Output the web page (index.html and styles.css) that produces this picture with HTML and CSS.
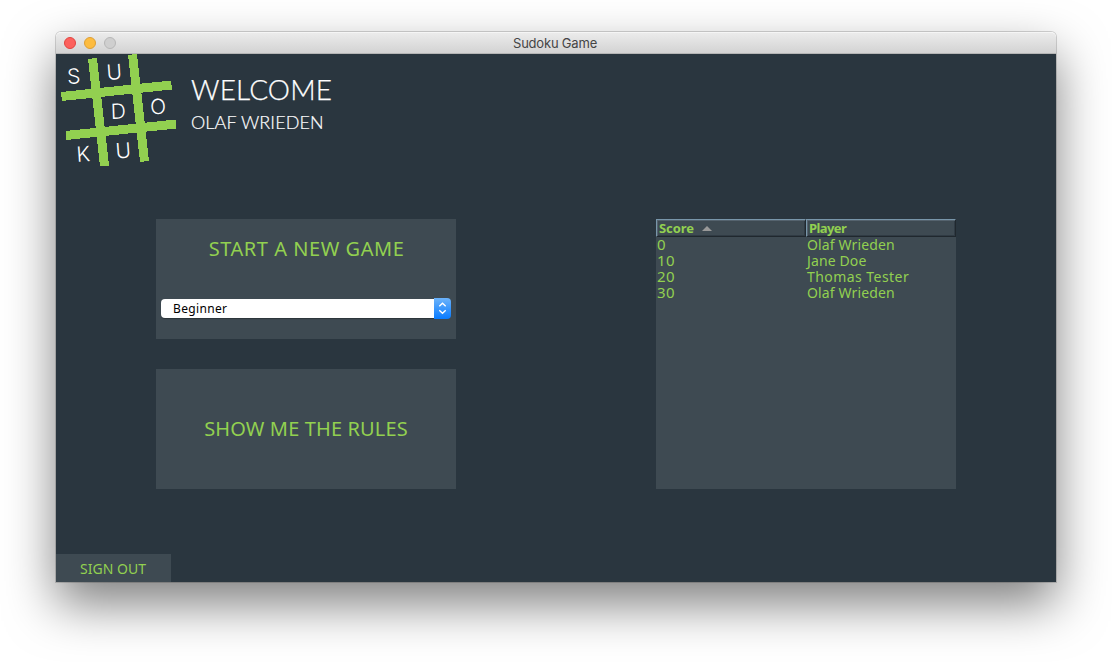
FILE: index.html
```html
<!DOCTYPE html>
<html lang="en">
<head>
<meta charset="utf-8">
<title>Sudoku Game</title>
<link rel="stylesheet" href="styles.css">
</head>
<body>
<main class="window">
  <header class="titlebar">
    <div class="lights"><i class="light close"></i><i class="light minimize"></i><i class="light disabled"></i></div>
    <span class="title">Sudoku Game</span>
  </header>
  <div class="content">
    <section class="top">
      <svg class="logo" viewBox="0 0 130 120" width="130" height="120" role="img" aria-label="Sudoku">
        <g stroke="#92d050" stroke-width="9" shape-rendering="crispEdges">
          <path d="M36.500 4.500 48.500 112M76.500 .5 88.500 107.500M5.500 42.500 115.500 31M10 81.500 120 70"/>
        </g>
        <g class="logo-text">
          <text transform="translate(11.500 30) rotate(-3)">S</text>
          <text transform="translate(51 26) rotate(-4)">U</text>
          <text transform="translate(55 65) rotate(-2)">D</text>
          <text transform="translate(94.500 60.500) rotate(-3)">O</text>
          <text transform="translate(21 108) rotate(-4)">K</text>
          <text transform="translate(60 104.500) rotate(-4)">U</text>
        </g>
      </svg>
      <div class="greeting">
        <h1 class="welcome">WELCOME</h1>
        <p class="user">OLAF WRIEDEN</p>
      </div>
    </section>
    <section class="panels">
      <div class="actions">
        <div class="card new-game">
          <button class="card-label start">START A NEW GAME</button>
          <div class="select">
            <span class="value">Beginner</span>
            <svg class="stepper" width="17" height="21" viewBox="0 0 17 21"><path d="M5.300 8.300 8.500 5.300l3.200 3M5.300 12.300l3.200 3 3.200-3" fill="none" stroke="#fff" stroke-width="1.400"/></svg>
          </div>
        </div>
        <button class="card card-label rules">SHOW ME THE RULES</button>
      </div>
      <div class="scores">
        <div class="row head"><span class="cell"><b>Score</b><i class="sort"></i></span><span class="cell"><b class="player-head">Player</b></span></div>
        <div class="row"><span class="points">0</span><span class="name">Olaf Wrieden</span></div>
        <div class="row"><span class="points">10</span><span class="name">Jane Doe</span></div>
        <div class="row"><span class="points">20</span><span class="name tester">Thomas Tester</span></div>
        <div class="row"><span class="points">30</span><span class="name">Olaf Wrieden</span></div>
      </div>
    </section>
    <button class="signout">SIGN OUT</button>
  </div>
</main>
</body>
</html>
```
FILE: styles.css
```css
* { box-sizing: border-box; }
body { margin: 0; padding: 32px 56px; height: 662px; overflow: hidden; background: #fff; font-family: "Noto Sans", sans-serif; }
button { border: 0; padding: 0; background: none; font-family: inherit; }
.window { width: 1000px; height: 550px; border-radius: 5px 5px 0 0; box-shadow: 0 0 0 1px rgba(0,0,0,.16), 0 22px 50px rgba(0,0,0,.5); }
.titlebar { display: grid; grid-template-columns: 100px 1fr 100px; align-items: center; height: 22px; background: linear-gradient(#ebebeb, #d3d3d3); border-top: 1px solid #f5f5f5; border-bottom: 1px solid #b5b5b5; border-radius: 5px 5px 0 0; }
.lights { display: flex; gap: 8px; padding-left: 8px; }
.light { width: 12px; height: 12px; border-radius: 50%; border: 1px solid; }
.close { background: #fc615d; border-color: #e2443f; }
.minimize { background: #fdbc40; border-color: #de9f34; }
.disabled { background: #cfcfcf; border-color: #b7b7b7; }
.title { text-align: center; color: #454545; font: 13px/20px Inter, sans-serif; letter-spacing: -.2px; padding-right: 2px; }
.content { display: flex; flex-direction: column; height: 528px; background: #2a363f; }
.top { display: flex; height: 165px; }
.logo { flex: none; }
.logo-text { fill: #fff; font: 300 21px Inter, sans-serif; }
.greeting { padding: 18px 0 0 5px; color: #fff; font-family: Lato, sans-serif; font-weight: 300; }
.welcome { margin: 0; font-size: 28px; line-height: 34px; font-weight: 300; letter-spacing: .15px; -webkit-text-stroke: .25px #fff; }
.user { margin: 4px 0 0; font-size: 18px; line-height: 24px; letter-spacing: .1px; -webkit-text-stroke: .2px #fff; }
.panels { display: flex; justify-content: space-between; padding: 0 100px; }
.actions { display: flex; flex-direction: column; gap: 30px; }
.card { display: flex; width: 300px; height: 120px; background: #3e4a52; }
.card-label { color: #92d050; font-size: 20px; line-height: 28px; }
.new-game { flex-direction: column; padding: 16px 5px 20px; }
.start { width: 100%; padding-left: 1px; letter-spacing: .55px; }
.select { display: flex; justify-content: space-between; margin-top: 35px; height: 21px; }
.value { flex: 1; height: 19px; margin-top: 1px; padding-left: 12px; background: #fff; border-radius: 4px 0 0 4px; color: #000; font-size: 12px; line-height: 20px; letter-spacing: .35px; box-shadow: 0 1px 1px rgba(0,0,0,.3); }
.stepper { background: linear-gradient(#6cb3fa, #087bff); border-radius: 0 4px 4px 0; }
.rules { align-items: center; justify-content: center; letter-spacing: .13px; }
.scores { width: 300px; height: 270px; background: #3e4a52; color: #92d050; font-size: 14px; line-height: 16px; }
.row { display: grid; grid-template-columns: 150px 150px; height: 16px; padding-left: 1px; }
.points { font-size: 15px; line-height: 14px; letter-spacing: .3px; }
.name { letter-spacing: .13px; }
.tester { letter-spacing: .45px; }
.head { height: 18px; padding: 0; font-size: 13px; }
.player-head { letter-spacing: -.6px; }
.cell { display: flex; align-items: center; gap: 8px; padding-left: 2px; border: 1px solid; border-color: #7896aa #20282e #20282e #7896aa; box-shadow: inset 1px 1px #55636e, inset -1px -1px #303b44; letter-spacing: -.1px; }
.sort { border: 5px solid transparent; border-top: 0; border-bottom-color: #999; }
.signout { width: 115px; height: 28px; margin-top: auto; padding-right: 1px; background: #3e4a52; color: #92d050; font-size: 14px; }
```
